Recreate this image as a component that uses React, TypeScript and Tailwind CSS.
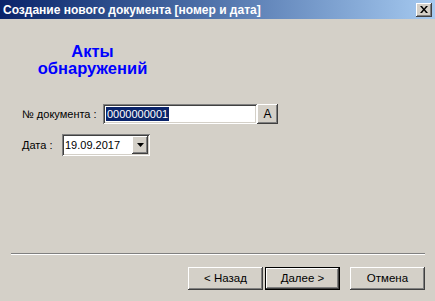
const raised =
  'shadow-[inset_-1px_-1px_#404040,inset_1px_1px_#ffffff,inset_-2px_-2px_#808080,inset_2px_2px_#d4d0c8]';
const sunken =
  'shadow-[inset_1px_1px_#808080,inset_-1px_-1px_#ffffff,inset_2px_2px_#404040,inset_-2px_-2px_#d4d0c8]';

function WinButton({ label, isDefault }: { label: string; isDefault?: boolean }) {
  if (isDefault) {
    return (
      <div className="w-[75px] h-[23px] border border-black bg-[#d4d0c8]">
        <div className={`w-full h-full flex items-center justify-center text-[11.5px] text-black ${raised}`}>
          {label}
        </div>
      </div>
    );
  }
  return (
    <div className={`w-[75px] h-[23px] flex items-center justify-center text-[11.5px] text-black bg-[#d4d0c8] ${raised}`}>
      {label}
    </div>
  );
}

export default function App() {
  return (
    <div
      className="w-[435px] h-[301px] bg-[#d4d0c8] flex flex-col overflow-hidden"
      style={{ fontFamily: '"Liberation Sans", Arial, sans-serif' }}
    >
      {/* title bar */}
      <div className="h-[19px] shrink-0 flex items-center justify-between pl-[3px] pr-[3px] bg-linear-to-r from-[#0a246a] to-[#a6caf0]">
        <span className="text-white font-bold text-[12px] leading-none">
          Создание нового документа [номер и дата]
        </span>
        <div className={`w-[16px] h-[14px] bg-[#d4d0c8] flex items-center justify-center ${raised}`}>
          <svg width="8" height="7" viewBox="0 0 8 7">
            <path d="M0 0h2l2 2.5L6 0h2L5 3.5 8 7H6L4 4.5 2 7H0l3-3.5z" fill="#000" />
          </svg>
        </div>
      </div>

      <div className="flex-1 flex flex-col">
        <div className="w-[185px] mt-[24px] text-center text-[#0000ff] font-bold text-[16.5px] leading-[17px]">
          Акты
          <br />
          обнаружений
        </div>

        <div className="mt-[27px] pl-[22px] flex items-center h-[20px]">
          <span className="w-[81px] shrink-0 whitespace-nowrap text-[11px] text-black">№ документа :</span>
          <div className={`w-[154px] h-[20px] bg-white flex items-center pl-[3px] ${sunken}`}>
            <span className="bg-[#0a246a] text-white text-[11px] leading-[14px] px-[1px]">0000000001</span>
          </div>
          <div className={`w-[21px] h-[20px] flex items-center justify-center text-[12px] text-black ${raised}`}>
            A
          </div>
        </div>

        <div className="mt-[10px] pl-[22px] flex items-center h-[22px]">
          <span className="w-[40px] shrink-0 whitespace-nowrap text-[11px] text-black">Дата :</span>
          <div className={`w-[88px] h-[22px] bg-white flex items-center pl-[3px] pr-[2px] ${sunken}`}>
            <span className="flex-1 text-[11px] text-black">19.09.2017</span>
            <div className={`w-[16px] h-[18px] bg-[#d4d0c8] flex items-center justify-center ${raised}`}>
              <svg width="7" height="4" viewBox="0 0 7 4">
                <path d="M0 0h7L3.5 4z" fill="#000" />
              </svg>
            </div>
          </div>
        </div>

        <div className="mt-auto ml-[11px] mr-[10px] border-t border-t-[#808080] border-b border-b-white" />

        <div className="flex justify-end pr-[10px] pt-[12px] pb-[11px]">
          <WinButton label="< Назад" />
          <div className="ml-[2px]">
            <WinButton label="Далее >" isDefault />
          </div>
          <div className="ml-[10px]">
            <WinButton label="Отмена" />
          </div>
        </div>
      </div>
    </div>
  );
}
